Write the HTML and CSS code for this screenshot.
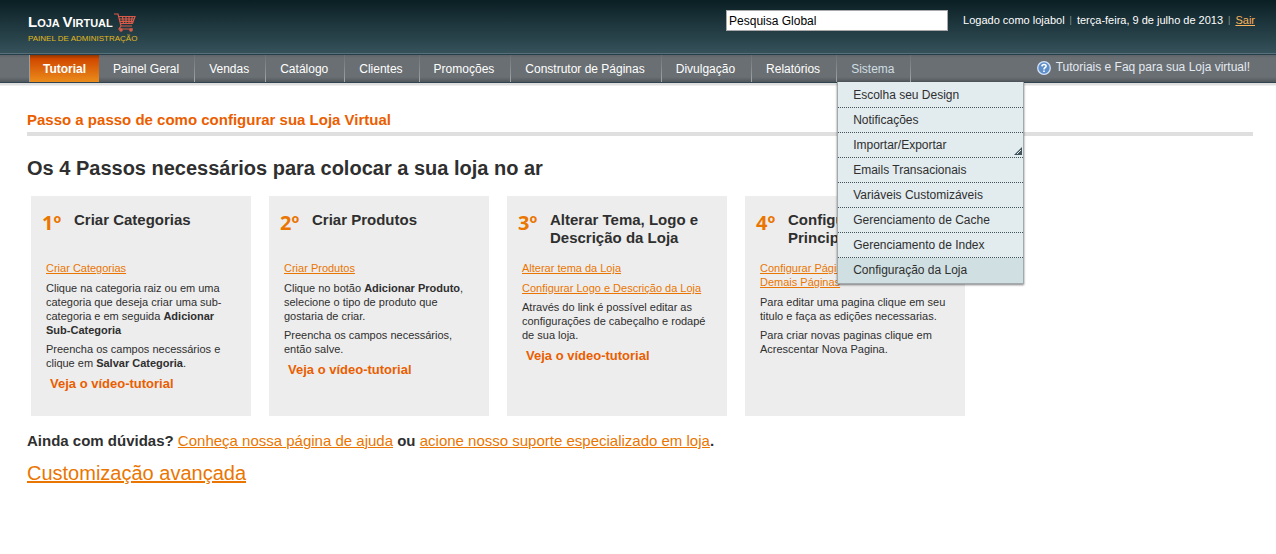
FILE: index.html
```html
<!DOCTYPE html>
<html lang="pt-BR">
<head>
<meta charset="utf-8">
<title>Loja Virtual - Painel de Administração</title>
<link rel="stylesheet" href="styles.css">
</head>
<body>
<header class="header">
  <div class="logo">
    <div class="logo-name"><span><b>L</b>OJA <b>V</b>IRTUAL</span>
      <svg class="cart" width="22" height="19" viewBox="0 0 22 19" fill="none" stroke="#d95a48" stroke-width="1.2" aria-hidden="true">
        <path d="M0 1h4l3 12h11M4.700 3.500H21L18.500 10.500H6.500M5.200 6H20M5.800 8.300H19M8.500 3.500l1 7M12 3.500v7M15 3.500v7M18.300 3.500l-1.300 7M7 13l-2 3h14"/>
        <circle cx="7" cy="17" r="1.200" fill="#d95a48"/><circle cx="17" cy="17" r="1.200" fill="#d95a48"/>
      </svg>
    </div>
    <div class="logo-sub">PAINEL DE ADMINISTRAÇÃO</div>
  </div>
  <div class="header-right">
    <input class="search" type="text" value="Pesquisa Global" aria-label="Pesquisa Global">
    <p class="session"><span>Logado como lojabol</span><i>|</i><span>terça-feira, 9 de julho de 2013</span><i>|</i><a href="#">Sair</a></p>
  </div>
</header>
<nav class="nav">
  <ul class="menu">
    <li class="active"><a href="#">Tutorial</a></li>
    <li><a href="#">Painel Geral</a></li>
    <li><a href="#">Vendas</a></li>
    <li><a href="#">Catálogo</a></li>
    <li><a href="#">Clientes</a></li>
    <li><a href="#">Promoções</a></li>
    <li><a href="#">Construtor de Páginas</a></li>
    <li><a href="#">Divulgação</a></li>
    <li><a href="#">Relatórios</a></li>
    <li class="open"><a href="#">Sistema</a>
      <ul class="submenu">
        <li><a href="#">Escolha seu Design</a></li>
        <li><a href="#">Notificações</a></li>
        <li class="parent"><a href="#">Importar/Exportar</a>
          <svg width="8" height="8" viewBox="0 0 8 8" aria-hidden="true"><path d="M8 0v8H0z" fill="#41545b"/><path d="M3 7l4-4" stroke="#e2ebee"/></svg>
        </li>
        <li><a href="#">Emails Transacionais</a></li>
        <li><a href="#">Variáveis Customizáveis</a></li>
        <li><a href="#">Gerenciamento de Cache</a></li>
        <li><a href="#">Gerenciamento de Index</a></li>
        <li class="over"><a href="#">Configuração da Loja</a></li>
      </ul>
    </li>
  </ul>
  <a class="help" href="#">
    <svg width="14" height="14" viewBox="0 0 14 14" fill="none" aria-hidden="true">
      <circle cx="7" cy="7" r="6.300" fill="#5e8fca" stroke="#d3e2f5" stroke-width="1.300"/>
      <path d="M4.900 5.400C5 2.800 9.200 2.900 9.100 5.200 9 6.600 7 6.500 7 8.400M7 9.500v1.600" stroke="#fff" stroke-width="1.600"/>
    </svg>
    <span>Tutoriais e Faq para sua Loja virtual!</span>
  </a>
</nav>
<main class="content">
  <h1 class="page-title">Passo a passo de como configurar sua Loja Virtual</h1>
  <h2 class="steps-title">Os 4 Passos necessários para colocar a sua loja no ar</h2>
  <div class="steps">
    <section class="step">
      <div class="step-head"><span class="num">1º</span><h3>Criar Categorias</h3></div>
      <div class="step-body">
        <p><a href="#">Criar Categorias</a></p>
        <p>Clique na categoria raiz ou em uma categoria que deseja criar uma sub-categoria e em seguida <b>Adicionar Sub-Categoria</b></p>
        <p>Preencha os campos necessários e clique em <b>Salvar Categoria</b>.</p>
        <a class="video" href="#">Veja o vídeo-tutorial</a>
      </div>
    </section>
    <section class="step">
      <div class="step-head"><span class="num">2º</span><h3>Criar Produtos</h3></div>
      <div class="step-body">
        <p><a href="#">Criar Produtos</a></p>
        <p>Clique no botão <b>Adicionar Produto</b>, selecione o tipo de produto que gostaria de criar.</p>
        <p>Preencha os campos necessários, então salve.</p>
        <a class="video" href="#">Veja o vídeo-tutorial</a>
      </div>
    </section>
    <section class="step">
      <div class="step-head"><span class="num">3º</span><h3>Alterar Tema, Logo e Descrição da Loja</h3></div>
      <div class="step-body">
        <p><a href="#">Alterar tema da Loja</a></p>
        <p><a href="#">Configurar Logo e Descrição da Loja</a></p>
        <p>Através do link é possível editar as configurações de cabeçalho e rodapé de sua loja.</p>
        <a class="video" href="#">Veja o vídeo-tutorial</a>
      </div>
    </section>
    <section class="step">
      <div class="step-head"><span class="num">4º</span><h3>Configurar Páginas Principais</h3></div>
      <div class="step-body">
        <p><a href="#">Configurar Páginas Principais e Demais Páginas</a></p>
        <p>Para editar uma pagina clique em seu titulo e faça as edições necessarias.</p>
        <p>Para criar novas paginas clique em Acrescentar Nova Pagina.</p>
      </div>
    </section>
  </div>
  <p class="doubts">Ainda com dúvidas? <a href="#">Conheça nossa página de ajuda</a> ou <a href="#">acione nosso suporte especializado em loja</a>.</p>
  <p class="custom"><a href="#">Customização avançada</a></p>
</main>
</body>
</html>
```
FILE: styles.css
```css
* { box-sizing: border-box; }
body, h1, h2, h3, p, ul { margin: 0; padding: 0; }
ul { list-style: none; }
body {
  background: #fff;
  color: #2f2f2f;
  font-family: "Liberation Sans", Arial, sans-serif;
  font-size: 11px;
  line-height: 14px;
}
a { color: #ea7601; }

.header {
  display: flex;
  justify-content: space-between;
  align-items: flex-start;
  height: 55px;
  padding: 10px 21px 0 28px;
  background: linear-gradient(#0a1f24, #36525b);
  border-bottom: 1px solid #253e4a;
  box-shadow: inset 0 -1px #587079;
}
.logo-name { display: flex; gap: 1px; color: #fff; font-size: 11px; font-weight: bold; line-height: 24px; height: 22px; white-space: nowrap; }
.logo-name b { font-size: 15px; }
.cart { margin-top: 3px; }
.logo-sub { color: #e0b91c; font-size: 8px; line-height: 14px; white-space: nowrap; }
.header-right { display: flex; gap: 15px; }
.search {
  width: 222px;
  height: 21px;
  padding: 0 2px;
  border: 1px solid #aaa;
  background: #fff;
  color: #000;
  font: 12px "Liberation Sans", Arial, sans-serif;
}
.session { display: flex; gap: 5px; color: #fff; line-height: 20px; white-space: nowrap; }
.session i { color: #8b9a8b; font-size: 9px; font-style: normal; }
.session a { color: #f9b35a; }

.nav {
  display: flex;
  justify-content: space-between;
  padding: 0 26px 0 29px;
  background: linear-gradient(#5d656a, #6a6f73 3px, #6a6f73 22px, #50575c);
  border-bottom: 1px solid #2f444e;
  box-shadow: 0 2px #dedede, 0 3px #efefef;
}
.menu { display: flex; border-left: 1px solid #999ea1; }
.menu > li {
  position: relative;
  border-right: 1px solid;
  border-image: linear-gradient(#6a6f73, #a5a8aa) 1;
}
.menu > li > a {
  display: block;
  padding: 1px 16px 0 14px;
  color: #fff;
  font-size: 12px;
  line-height: 26px;
  text-decoration: none;
  white-space: nowrap;
}
.menu > .active { border-right: 0; }
.menu > .active > a { padding: 1px 13px 0; background: linear-gradient(#8f3500, #d14900 4px, #eb8c1b); font-weight: bold; }
.menu > .active + li > a { padding: 1px 15px 0 14px; }
.menu > .open > a { color: #cfdde2; }
.submenu {
  position: absolute;
  top: 100%;
  left: 0;
  z-index: 2;
  width: 187px;
  padding: 1px 0 0;
  background: #e2ebee;
  border: 1px solid #a3aaad;
  border-width: 0 1px 1px;
  box-shadow: 0 1px 2px rgba(0, 0, 0, .5);
}
.submenu li { position: relative; border-bottom: 1px dotted #41545b; }
.submenu li:last-child { border-bottom: 0; }
.submenu a { display: block; padding: 1px 15px 0; color: #2f2f2f; font-size: 12px; line-height: 23px; text-decoration: none; white-space: nowrap; }
.submenu .over { background: #d0dfe2; }
.submenu .over a { padding-bottom: 1px; }
.submenu svg { position: absolute; right: 1px; bottom: 2px; }
.help { display: flex; align-items: center; gap: 5px; padding-bottom: 2px; color: #e3eaf2; font-size: 12px; line-height: 25px; text-decoration: none; white-space: nowrap; }

.content { padding: 28px 23px 20px 27px; }
.page-title { padding-bottom: 3px; border-bottom: 4px solid #dfdfdf; color: #eb5e00; font-size: 15px; line-height: 18px; }
.steps-title { margin-top: 20px; font-size: 20px; line-height: 24px; }
.steps { display: flex; flex-wrap: wrap; gap: 18px; margin: 16px 4px 0; }
.step { width: 220px; min-height: 220px; padding: 15px 11px; background: #ededed; }
.step-head { display: flex; min-height: 50px; }
.num { width: 32px; color: #ea7601; font: bold 20px/24px "Open Sans", sans-serif; }
.step h3 { flex: 1; font-size: 15px; line-height: 18px; }
.step-body { padding: 0 4px; }
.step-body p { margin-bottom: 5px; }
.step-body p:first-child { margin-bottom: 6px; }
.video { display: block; padding-left: 4px; color: #eb5e00; font-size: 13px; line-height: 18px; font-weight: bold; text-decoration: none; }
.doubts { margin-top: 16px; font-size: 15px; line-height: 18px; font-weight: bold; }
.doubts a { font-weight: normal; }
.custom { margin-top: 11px; font-size: 20px; line-height: 24px; }
```
